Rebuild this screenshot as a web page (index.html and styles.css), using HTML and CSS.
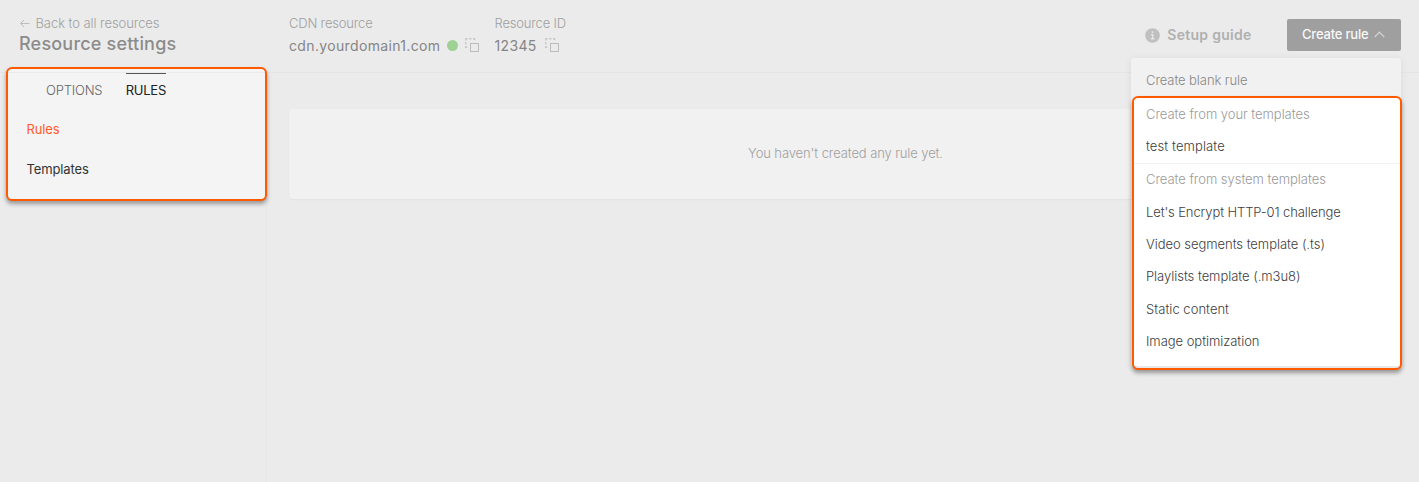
FILE: index.html
```html
<!DOCTYPE html>
<html lang="en">
<head>
<meta charset="utf-8">
<title>Resource settings</title>
<link rel="stylesheet" href="styles.css">
</head>
<body>
<header class="header">
  <div class="heading">
    <a class="back"><svg class="back-icon" width="12" height="10" viewBox="0 0 12 10"><path d="M10.5 5.5H1.5M5 2L1.5 5.5L5 9"/></svg><span class="back-text">Back to all resources</span></a>
    <h1 class="title">Resource settings</h1>
  </div>
  <div class="field field-cdn">
    <div class="label">CDN resource</div>
    <div class="value"><span class="domain">cdn.yourdomain1.com</span><i class="status"></i><svg class="copy" width="14" height="14" viewBox="0 0 14 14"><path class="dashes" d="M.7 2.5V.7H2.5M4 .7H6.5M8 .7H9.5V2M.7 4V6.5M.7 8V9.3H2.3"/><rect x="5.5" y="5.5" width="8" height="8"/></svg></div>
  </div>
  <div class="field">
    <div class="label label-id">Resource ID</div>
    <div class="value"><span class="number">12345</span><svg class="copy copy-id" width="14" height="14" viewBox="0 0 14 14"><path class="dashes" d="M.7 2.5V.7H2.5M4 .7H6.5M8 .7H9.5V2M.7 4V6.5M.7 8V9.3H2.3"/><rect x="5.5" y="5.5" width="8" height="8"/></svg></div>
  </div>
  <div class="actions">
    <a class="guide"><svg width="15" height="15" viewBox="0 0 15 15"><circle cx="7.5" cy="7.5" r="7.3" fill="#c0c0c0"/><path d="M6 6.7H7.7V11M5.8 10.8H9.4" stroke="#ebebeb" stroke-width="1.2" fill="none"/><circle cx="7.5" cy="4.1" r=".9" fill="#ebebeb"/></svg><span class="guide-text">Setup guide</span></a>
    <button class="create"><span class="create-text">Create rule</span><svg width="11" height="7" viewBox="0 0 11 7"><path d="M.7 6L5.5 1.2L10.3 6"/></svg></button>
    <div class="menu">
      <div class="blank">Create blank rule</div>
      <div class="templates">
        <div class="item caption">Create from your templates</div>
        <div class="item own">test template</div>
        <div class="item caption divided">Create from system templates</div>
        <div class="item challenge">Let's Encrypt HTTP-01 challenge</div>
        <div class="item">Video segments template (.ts)</div>
        <div class="item">Playlists template (.m3u8)</div>
        <div class="item static">Static content</div>
        <div class="item">Image optimization</div>
      </div>
    </div>
  </div>
</header>
<div class="body">
  <aside class="sidebar">
    <div class="panel">
      <nav class="tabs"><a class="tab">OPTIONS</a><a class="tab active">RULES</a></nav>
      <a class="link current">Rules</a>
      <a class="link">Templates</a>
    </div>
  </aside>
  <main class="main"><div class="empty"><span>You haven't created any rule yet.</span></div></main>
</div>
</body>
</html>
```
FILE: styles.css
```css
* { box-sizing: border-box; }
body { margin: 0; height: 482px; overflow: hidden; display: flex; flex-direction: column; background: #ebebeb; font: 300 13px/16px Inter, "Liberation Sans", sans-serif; color: #404040; }
svg { flex: none; display: block; }
.header { height: 73px; border-bottom: 1px solid #e5e5e5; display: flex; flex: none; }
.heading { width: 289px; padding: 15px 0 0 19px; }
.back { display: flex; align-items: center; gap: 4.5px; height: 16px; color: #9f9f9f; }
.back-text { letter-spacing: -.07px; }
.back-icon path, .copy path, .copy rect { fill: none; stroke: #bcbcbc; }
.copy .dashes { stroke: #c8c8c8; stroke-width: 1.4; }
.title { margin: 2px 0 0; font-size: 18px; line-height: 22px; font-weight: 500; color: #8b8b8b; letter-spacing: .2px; }
.field { padding-top: 15px; }
.field-cdn { width: 205.5px; }
.label { color: #9f9f9f; letter-spacing: -.18px; }
.value { display: flex; align-items: center; height: 20px; margin-top: 5px; font-size: 14px; font-weight: 400; color: #858585; letter-spacing: .35px; }
.status { width: 11px; height: 11px; border-radius: 50%; background: #9fd197; margin: 0 7px 1px; }
.copy { margin-bottom: 2px; }
.number { width: 43.5px; }
.copy-id { margin-left: 6.5px; }
.actions { position: relative; margin-left: auto; padding: 19px 18px 0 0; display: flex; align-items: flex-start; gap: 35.5px; }
.guide { display: flex; align-items: center; gap: 7px; height: 32px; font-size: 14px; font-weight: 600; color: #b0b0b0; letter-spacing: .27px; }
.create { width: 114px; height: 32px; border: 0; border-radius: 2px; background: #9f9f9f; color: #f8f8f8; font: 500 13px/16px Inter, sans-serif; padding: 0 0 2px 15px; display: flex; align-items: center; gap: 6px; letter-spacing: -.2px; }
.create path { fill: none; stroke: #d0d0d0; stroke-width: 1.3; }
.menu { position: absolute; right: 18px; top: 58px; width: 270px; height: 309px; background: #f1f1f1; border-radius: 3px; box-shadow: 0 1px 8px rgba(0,0,0,.07); z-index: 3; }
.blank { height: 38px; padding: 14px 0 0 15px; color: #878787; letter-spacing: -.08px; }
.templates { width: 270px; height: 274px; margin-left: 1px; border: 2px solid #ff5a00; border-radius: 6px; background: linear-gradient(#e8e8e8, #e8e8e8) 0 268px / 100% 2px no-repeat #fff; box-shadow: 0 3px 4px rgba(0,0,0,.35); }
.item { height: 32.4px; display: flex; align-items: center; padding-left: 12px; white-space: nowrap; letter-spacing: -.04px; }
.own { padding-bottom: 1px; letter-spacing: .1px; }
.static { letter-spacing: .03px; }
.caption { color: #9a9a9a; }
.divided { border-top: 1px solid #f3f3f3; }
.challenge { padding-top: 1px; letter-spacing: -.11px; }
.body { flex: 1; display: flex; }
.sidebar { width: 267px; border-right: 1px solid #e5e5e5; flex: none; }
.panel { position: relative; z-index: 2; width: 261px; height: 134px; margin: -6px 0 0 6px; border: 2px solid #ff5a00; border-radius: 6px; background: linear-gradient(#ebebeb, #ebebeb) 0 3px / 100% 1px no-repeat #f4f4f4; box-shadow: 0 3px 4px rgba(0,0,0,.35); }
.tabs { display: flex; gap: 23.3px; padding: 4px 0 0 38px; height: 40px; }
.tab { padding-top: 8px; color: #666; height: 30px; border-top: 1px solid transparent; letter-spacing: -.18px; }
.active { color: #222; font-weight: 400; border-color: #555; letter-spacing: -.25px; }
.link { display: block; height: 40px; padding: 12px 0 0 18.5px; color: #333; font-weight: 400; letter-spacing: -.12px; }
.current { color: #ff5a2a; }
.main { flex: 1; padding: 36px 18px 0 22px; }
.empty { height: 90px; padding: 0 0 2px 1px; background: #f1f1f1; border-radius: 4px; box-shadow: 0 1px 2px rgba(0,0,0,.04); display: flex; align-items: center; justify-content: center; color: #a0a0a0; letter-spacing: -.1px; }
```
